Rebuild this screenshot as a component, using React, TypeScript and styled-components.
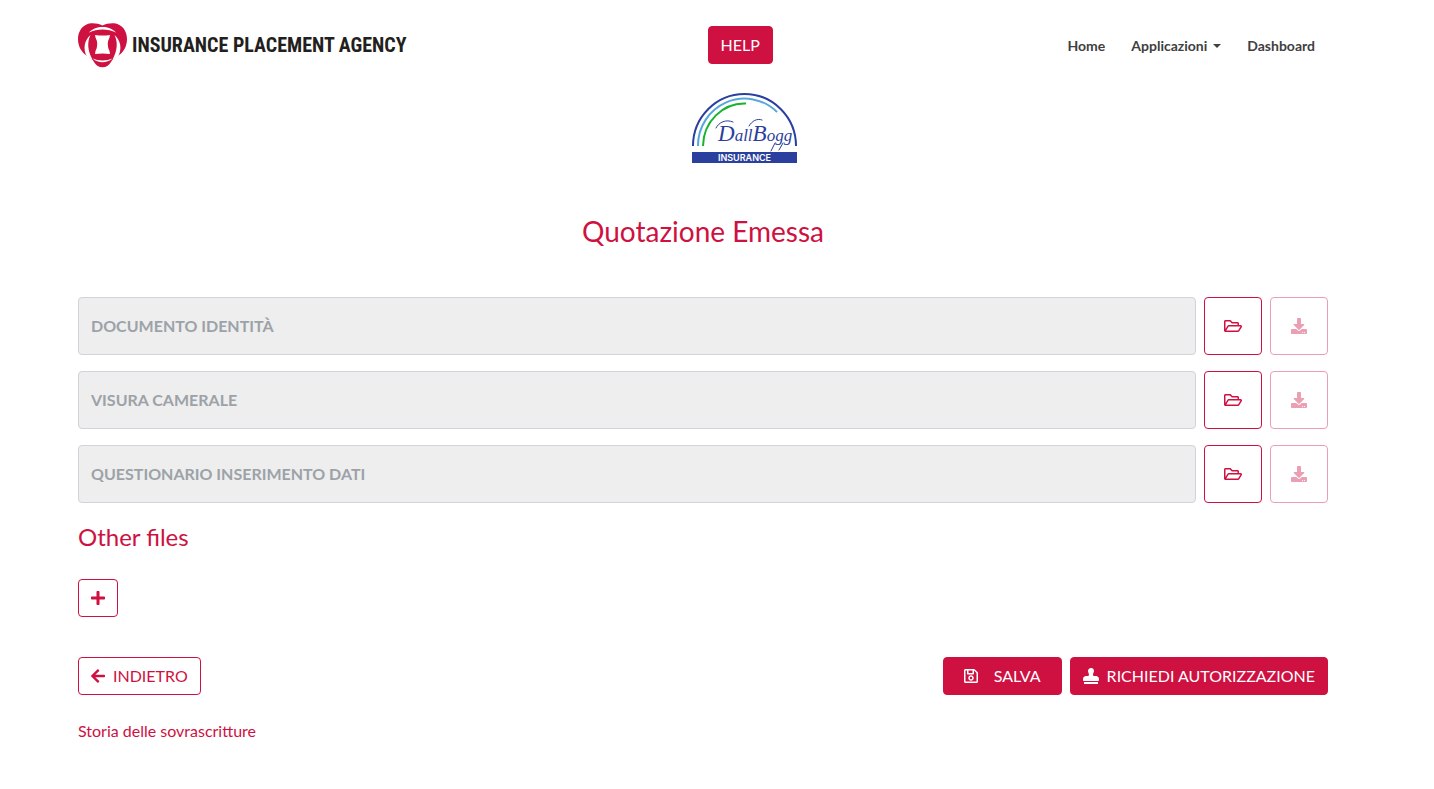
import React from "react";
import styled, { createGlobalStyle, css } from "styled-components";
import {
  FaArrowLeft,
  FaDownload,
  FaPlus,
  FaRegFolderOpen,
  FaRegSave,
  FaStamp,
} from "react-icons/fa";

const RED = "#ce1141";

const GlobalStyle = createGlobalStyle`
  *, *::before, *::after { box-sizing: border-box; }
  body {
    margin: 0;
    background: #fff;
    color: #404040;
    font-family: Lato, "Liberation Sans", sans-serif;
    font-size: 16px;
    line-height: 24px;
  }
`;

const Page = styled.div`
  padding: 0 106px 40px 78px;
`;

const Header = styled.header`
  display: flex;
  align-items: center;
  justify-content: space-between;
  height: 90px;
`;

const Brand = styled.a`
  display: flex;
  flex: 0 0 348px;
  align-items: center;
  gap: 4px;
  color: #231f20;
  text-decoration: none;
`;

const BrandName = styled.span`
  font-family: "Roboto Condensed", "Liberation Sans Narrow", "Liberation Sans", sans-serif;
  font-size: 20px;
  font-weight: 700;
  white-space: nowrap;
`;

const Nav = styled.nav`
  display: flex;
  padding-top: 2px;
`;

const NavLink = styled.a`
  display: flex;
  align-items: center;
  gap: 6px;
  padding: 0 13px;
  color: #404040;
  font-size: 14px;
  font-weight: 700;
  text-decoration: none;
`;

const Caret = styled.span`
  border: 4px solid transparent;
  border-top-color: currentColor;
  border-bottom: 0;
`;

const Button = styled.button<{ $outline?: boolean; $wide?: boolean; $iconWidth?: number }>`
  display: inline-flex;
  align-items: center;
  justify-content: center;
  gap: ${(p) => (p.$wide ? 16 : 8)}px;
  height: 38px;
  padding: 0 ${(p) => (p.$wide ? 20 : 12)}px;
  border: 1px solid ${RED};
  border-radius: 4px;
  background: ${RED};
  color: #fff;
  font: inherit;
  white-space: nowrap;
  cursor: pointer;

  svg {
    flex: none;
    width: ${(p) => p.$iconWidth ?? 14}px;
    height: 16px;
  }

  ${(p) =>
    p.$outline &&
    css`
      padding: 0 ${p.$wide ? 20 : 12}px;
      background: #fff;
      color: ${RED};
    `}
`;

const IconButton = styled(Button)`
  flex: none;
  width: 58px;
  height: 58px;
  padding: 0;

  &:disabled {
    opacity: 0.4;
    cursor: default;
  }
`;

const Partner = styled.div`
  display: flex;
  justify-content: center;
  padding: 3px 0 0 83px;
`;

const Title = styled.h1`
  margin: 50px 0 48px;
  color: ${RED};
  font-size: 28px;
  font-weight: 400;
  line-height: 36px;
  text-align: center;
`;

const Subtitle = styled.h2`
  margin: 20px 0 28px;
  color: ${RED};
  font-size: 24px;
  font-weight: 400;
  line-height: 28px;
`;

const FileList = styled.div`
  display: flex;
  flex-direction: column;
  gap: 16px;
`;

const FileRow = styled.div`
  display: flex;
  gap: 8px;
`;

const FileName = styled.input`
  flex: 1;
  min-width: 0;
  height: 58px;
  padding: 0 12px 2px;
  border: 1px solid #ced4da;
  border-radius: 4px;
  background: #eee;
  color: #9ca2a8;
  font: inherit;
  font-weight: 700;
`;

const Actions = styled.div`
  display: flex;
  justify-content: space-between;
  margin: 40px 0 24px;
`;

const ActionGroup = styled.div`
  display: flex;
  gap: 8px;
`;

const HistoryLink = styled.a`
  color: ${RED};
  text-decoration: none;
`;

const HeartLogo = () => (
  <svg width="50" height="45" viewBox="0 0 50 45" aria-hidden="true">
    <path
      fill={RED}
      d="M24.500 2.600C21 .8 17 0 13 .3C5 1 0 8 0 16C0 24 4 30 10 33.500C13 35.500 14.500 36.500 16 39C18 42.500 21 44.300 24.500 44.300C28 44.300 31 42.500 33 39C34.500 36.500 36 35.500 39 33.500C45 30 49 24 49 16C49 8 44 1 36 .3C32 0 28 .8 24.500 2.600Z"
    />
    <g fill="#fff">
      <path d="M11 9.500C15 5.500 19 4 24.500 4S34 5.500 38 9.500C34 7.600 29 6.600 24.500 6.600S15 7.600 11 9.500Z" />
      <path d="M12.500 12C6.500 17 4.500 26 9 33.500L14.500 36.500C9.500 28 9 19 12.500 12Z" />
      <path d="M36.500 12C42.500 17 44.500 26 40 33.500L34.500 36.500C39.500 28 40 19 36.500 12Z" />
      <path d="M17 12Q24.500 13 32 12L31.500 14.500Q28 21 31.500 28L32 31Q24.500 30 17 31L17.500 28Q21 21 17.500 14.500Z" />
      <path d="M14.500 35.500Q19 39.300 24.500 39.300T34.500 35.500Q30 37.600 24.500 37.600T14.500 35.500Z" />
    </g>
  </svg>
);

const PartnerLogo = () => (
  <svg width="105" height="70" viewBox="0 0 105 70" role="img" aria-label="DallBogg Insurance">
    <g fill="none" strokeWidth="2">
      <path stroke="#2b3f9e" d="M1 53A51.500 52 0 0 1 104 53" />
      <path stroke="#56a8d8" d="M6 53A46.500 47 0 0 1 85 19" />
      <path stroke="#16b32c" d="M11 53A41.500 43 0 0 1 54 10.500" />
    </g>
    <text
      x="26"
      y="48"
      fill="#2b3f9e"
      fontFamily="'Liberation Serif', serif"
      fontStyle="italic"
      fontSize="17"
    >
      <tspan fontSize="23">D</tspan>all<tspan fontSize="23">B</tspan>ogg
    </text>
    <g fill="none" stroke="#2b3f9e" strokeWidth="1" strokeLinecap="round">
      <path d="M24 35C27 29 34 26 41 29" />
      <path d="M57 33C60 28 65 25 70 27" />
      <path d="M83 50L79 58M91 50L87 57" />
    </g>
    <rect y="59" width="105" height="11" fill="#2b3f9e" />
    <text
      x="52.500"
      y="68"
      fill="#fff"
      fontFamily="Inter, 'Liberation Sans', sans-serif"
      fontSize="9"
      fontWeight="600"
      textAnchor="middle"
    >
      INSURANCE
    </text>
  </svg>
);

const files = ["DOCUMENTO IDENTITÀ", "VISURA CAMERALE", "QUESTIONARIO INSERIMENTO DATI"];

export default function App() {
  return (
    <>
      <GlobalStyle />
      <Page>
        <Header>
          <Brand href="#">
            <HeartLogo />
            <BrandName>INSURANCE PLACEMENT AGENCY</BrandName>
          </Brand>
          <Button type="button">HELP</Button>
          <Nav>
            <NavLink href="#">Home</NavLink>
            <NavLink href="#">
              Applicazioni <Caret />
            </NavLink>
            <NavLink href="#">Dashboard</NavLink>
          </Nav>
        </Header>
        <main>
          <Partner>
            <PartnerLogo />
          </Partner>
          <Title>Quotazione Emessa</Title>
          <FileList>
            {files.map((name) => (
              <FileRow key={name}>
                <FileName aria-label={name} value={name} disabled readOnly />
                <IconButton type="button" $outline $iconWidth={18} aria-label={`Apri ${name}`}>
                  <FaRegFolderOpen />
                </IconButton>
                <IconButton
                  type="button"
                  $outline
                  $iconWidth={16}
                  disabled
                  aria-label={`Scarica ${name}`}
                >
                  <FaDownload />
                </IconButton>
              </FileRow>
            ))}
          </FileList>
          <Subtitle>Other files</Subtitle>
          <Button type="button" $outline aria-label="Aggiungi file">
            <FaPlus />
          </Button>
          <Actions>
            <Button type="button" $outline>
              <FaArrowLeft />
              INDIETRO
            </Button>
            <ActionGroup>
              <Button type="button" $wide>
                <FaRegSave />
                SALVA
              </Button>
              <Button type="button" $iconWidth={16}>
                <FaStamp />
                RICHIEDI AUTORIZZAZIONE
              </Button>
            </ActionGroup>
          </Actions>
          <HistoryLink href="#">Storia delle sovrascritture</HistoryLink>
        </main>
      </Page>
    </>
  );
}
